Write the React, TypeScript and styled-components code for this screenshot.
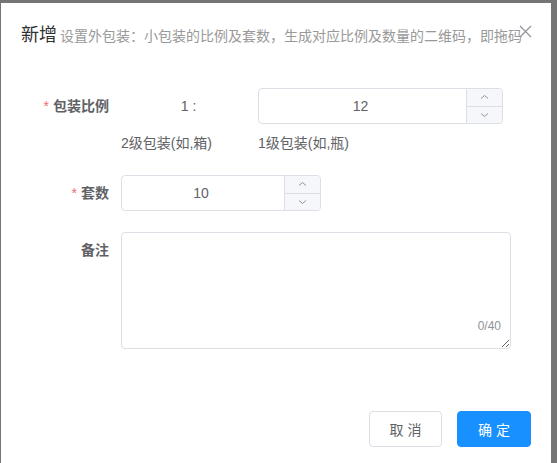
import React, { useState } from 'react';
import styled, { createGlobalStyle } from 'styled-components';

const GlobalStyle = createGlobalStyle`
  html, body {
    margin: 0;
    padding: 0;
    background: #757575;
  }
  body {
    font-family: "Liberation Sans", "Noto Sans CJK SC", sans-serif;
  }
  * {
    box-sizing: border-box;
  }
`;

const Overlay = styled.div`
  width: 557px;
  height: 463px;
  padding: 3px 0 0 1px;
  overflow: hidden;
`;

const Dialog = styled.div`
  position: relative;
  width: 550px;
  height: 460px;
  background: #fff;
  display: flex;
  flex-direction: column;
`;

const Header = styled.div`
  display: flex;
  align-items: baseline;
  padding: 20px 20px 10px;
  white-space: nowrap;
  overflow: hidden;
  height: 54px;
`;

const Title = styled.span`
  font-size: 18px;
  line-height: 24px;
  color: #303133;
`;

const SubTitle = styled.span`
  font-size: 14px;
  line-height: 24px;
  color: #999;
  margin-left: 3px;
`;

const CloseButton = styled.button`
  position: absolute;
  top: 22px;
  right: 19px;
  width: 13px;
  height: 13px;
  padding: 0;
  border: none;
  background: transparent;
  cursor: pointer;
  display: flex;
`;

const Body = styled.div`
  padding: 31px 20px 0;
  display: flex;
  flex-direction: column;
`;

const FormItem = styled.div<{ gap?: number }>`
  display: flex;
  align-items: flex-start;
  margin-bottom: ${p => p.gap ?? 0}px;
`;

const Label = styled.label<{ required?: boolean }>`
  width: 100px;
  flex: none;
  padding-right: 12px;
  text-align: right;
  font-size: 14px;
  line-height: 36px;
  font-weight: bold;
  color: #606266;
  &::before {
    content: ${p => (p.required ? "'*'" : "''")};
    color: #f56c6c;
    font-weight: normal;
    margin-right: 4px;
  }
`;

const RatioGrid = styled.div<{ tall?: boolean }>`
  display: grid;
  grid-template-columns: 137px 245px;
  align-items: center;
  font-size: 14px;
  line-height: ${p => (p.tall ? 36 : 22)}px;
  color: #606266;
`;

const Ratio = styled.span`
  text-align: center;
  padding-right: 2px;
`;

const TipRow = styled.div`
  margin: 8px 0 21px 100px;
`;

const NumberBox = styled.div<{ width: number }>`
  display: flex;
  width: ${p => p.width}px;
  height: 36px;
  border: 1px solid #dcdfe6;
  border-radius: 4px;
  overflow: hidden;
  background: #fff;
`;

const NumberField = styled.input`
  flex: 1;
  min-width: 0;
  border: none;
  outline: none;
  text-align: center;
  font-family: "Liberation Sans", "Noto Sans CJK SC", sans-serif;
  font-size: 14px;
  color: #606266;
  padding: 0 4px 0 0;
  background: transparent;
`;

const Controls = styled.div`
  width: 36px;
  flex: none;
  display: flex;
  flex-direction: column;
  border-left: 1px solid #dcdfe6;
  background: #f5f7fa;
`;

const Step = styled.button<{ down?: boolean }>`
  flex: 1;
  border: none;
  padding: 0;
  background: transparent;
  display: flex;
  align-items: center;
  justify-content: center;
  cursor: pointer;
  border-top: ${p => (p.down ? '1px solid #dcdfe6' : 'none')};
`;

const TextareaWrap = styled.div`
  position: relative;
  width: 390px;
  height: 117px;
`;

const Textarea = styled.textarea`
  width: 100%;
  height: 100%;
  border: 1px solid #dcdfe6;
  border-radius: 4px;
  resize: vertical;
  outline: none;
  padding: 5px 15px;
  font-family: "Liberation Sans", "Noto Sans CJK SC", sans-serif;
  font-size: 14px;
  color: #606266;
  display: block;
`;

const Count = styled.span`
  position: absolute;
  right: 10px;
  bottom: 16px;
  font-size: 12px;
  line-height: 14px;
  color: #909399;
`;

const Footer = styled.div`
  margin-top: auto;
  padding: 0 20px 16px;
  display: flex;
  justify-content: flex-end;
  gap: 15px;
`;

const Button = styled.button<{ primary?: boolean }>`
  height: 36px;
  width: ${p => (p.primary ? 74 : 73)}px;
  border-radius: 4px;
  border: 1px solid ${p => (p.primary ? '#1890ff' : '#dcdfe6')};
  background: ${p => (p.primary ? '#1890ff' : '#fff')};
  color: ${p => (p.primary ? '#fff' : '#606266')};
  font-family: "Liberation Sans", "Noto Sans CJK SC", sans-serif;
  font-size: 14px;
  padding: 0;
  cursor: pointer;
`;

const Chevron = ({ down }: { down?: boolean }) => (
  <svg width="9" height="6" viewBox="0 0 9 6">
    <path
      d={down ? 'M1 1.5 L4.5 4.5 L8 1.5' : 'M1 4.5 L4.5 1.5 L8 4.5'}
      fill="none"
      stroke="#909399"
      strokeWidth="1"
    />
  </svg>
);

const InputNumber = ({ value, onChange, width }: { value: number; onChange: (v: number) => void; width: number }) => (
  <NumberBox width={width}>
    <NumberField value={value} onChange={e => onChange(Number(e.target.value) || 0)} />
    <Controls>
      <Step onClick={() => onChange(value + 1)}>
        <Chevron />
      </Step>
      <Step down onClick={() => onChange(Math.max(1, value - 1))}>
        <Chevron down />
      </Step>
    </Controls>
  </NumberBox>
);

const App: React.FC = () => {
  const [ratio, setRatio] = useState(12);
  const [sets, setSets] = useState(10);
  const [remark, setRemark] = useState('');

  return (
    <>
      <GlobalStyle />
      <Overlay>
        <Dialog>
          <Header>
            <Title>新增</Title>
            <SubTitle>设置外包装：小包装的比例及套数，生成对应比例及数量的二维码，即拖码</SubTitle>
          </Header>
          <CloseButton aria-label="关闭">
            <svg width="13" height="13" viewBox="0 0 13 13">
              <path d="M1 1 L12 12 M12 1 L1 12" stroke="#909399" strokeWidth="1.2" />
            </svg>
          </CloseButton>
          <Body>
            <FormItem>
              <Label required>包装比例</Label>
              <RatioGrid tall>
                <Ratio>1 :</Ratio>
                <InputNumber value={ratio} onChange={setRatio} width={245} />
              </RatioGrid>
            </FormItem>
            <TipRow>
              <RatioGrid>
                <span>2级包装(如,箱)</span>
                <span>1级包装(如,瓶)</span>
              </RatioGrid>
            </TipRow>
            <FormItem gap={21}>
              <Label required>套数</Label>
              <InputNumber value={sets} onChange={setSets} width={200} />
            </FormItem>
            <FormItem>
              <Label>备注</Label>
              <TextareaWrap>
                <Textarea maxLength={40} value={remark} onChange={e => setRemark(e.target.value)} />
                <Count>{remark.length}/40</Count>
              </TextareaWrap>
            </FormItem>
          </Body>
          <Footer>
            <Button>取 消</Button>
            <Button primary>确 定</Button>
          </Footer>
        </Dialog>
      </Overlay>
    </>
  );
};

export default App;
